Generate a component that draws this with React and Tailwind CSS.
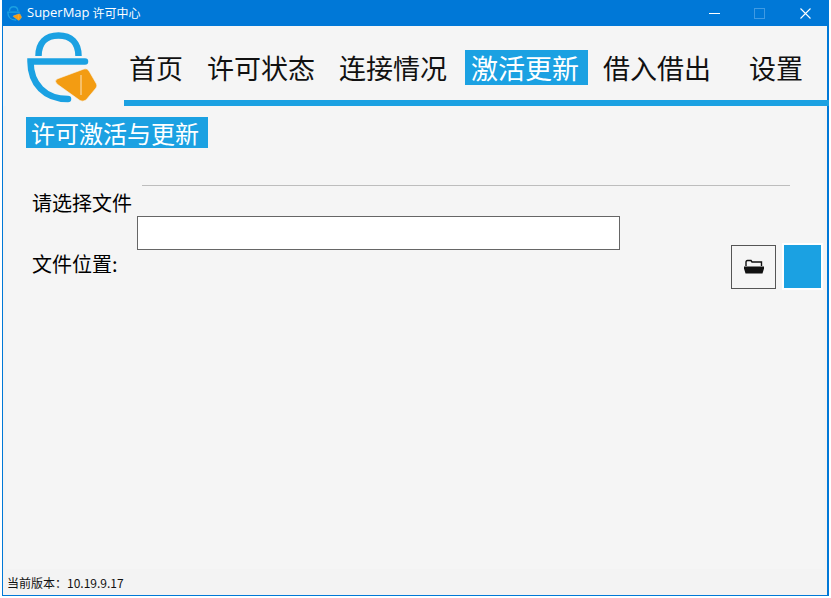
const font = { fontFamily: '"Noto Sans CJK SC", "Liberation Sans", sans-serif' }

function Logo({ className }) {
  return (
    <svg className={className} viewBox="27 32 71 72" fill="none">
      <path d="M38.5 56 C38.5 43 46 35.5 58.5 35.5 C71 35.5 78.5 43 78.5 56" stroke="#1ba1e2" strokeWidth="6.5" />
      <path d="M85 61.5 L30.5 61.5 C30.5 84 45 99 68 99" stroke="#1ba1e2" strokeWidth="6.5" strokeLinecap="round" />
      <path d="M57 79 L84 69 Q87 68 89 71 L96.5 84 Q97.5 86 96 88 L86 100 Q83 102 80 100.5 L57 84 Q54 81 57 79 Z" fill="#f39c12" stroke="#f5f5f5" strokeWidth="0.6" />
      <path d="M81 75 L81 95" stroke="#fbe3bd" strokeWidth="1" />
    </svg>
  )
}

function NavItem({ label, active, className }) {
  return (
    <div className={'h-[35px] leading-[36px] text-[27px] pl-[6px] ' + (active ? 'pr-[9px] bg-[#1ba1e2] text-white ' : 'pr-[6px] text-[#111] ') + className}>
      {label}
    </div>
  )
}

export default function App() {
  return (
    <div className="w-[831px] h-[598px] bg-white pl-[2px]" style={font}>
      <div className="w-[827px] h-[596px] border-l border-r-2 border-b border-[#0078d7] flex flex-col bg-[#f3f3f3]">
        <div className="h-[26px] shrink-0 -ml-px -mr-[2px] bg-[#0078d7] flex items-center text-white">
          <Logo className="w-[15px] h-[15px] ml-[5px]" />
          <span className="ml-[5px] text-[13px]" style={{ fontFamily: '"Open Sans", sans-serif' }}>SuperMap</span>
          <span className="ml-[3px] text-[12px]">许可中心</span>
          <div className="ml-auto flex items-center">
            <svg width="11" height="11" viewBox="0 0 11 11" shapeRendering="crispEdges">
              <path d="M0 5.5 H11" stroke="white" strokeWidth="1" />
            </svg>
            <svg width="11" height="11" viewBox="0 0 11 11" shapeRendering="crispEdges" className="ml-[34px]">
              <rect x="0.5" y="0.5" width="10" height="10" fill="none" stroke="#3f9ae3" strokeWidth="1" />
            </svg>
            <svg width="11" height="11" viewBox="0 0 11 11" className="ml-[35px] mr-[18px]">
              <path d="M0.5 0.5 L10.5 10.5 M10.5 0.5 L0.5 10.5" stroke="white" strokeWidth="1.1" />
            </svg>
          </div>
        </div>

        <div className="flex h-[80px] shrink-0 bg-[#f5f5f5]">
          <Logo className="w-[71px] h-[72px] ml-[24px] mt-[6px]" />
          <div className="flex-1 ml-[26px] -mr-[2px] border-b-[6px] border-[#1ba1e2] flex items-start pt-[24px]">
            <NavItem label="首页" className="-ml-px" />
            <NavItem label="许可状态" className="ml-[12px]" />
            <NavItem label="连接情况" className="ml-[12px]" />
            <NavItem label="激活更新" active className="ml-[12px]" />
            <NavItem label="借入借出" className="ml-[9px]" />
            <NavItem label="设置" className="ml-[26px]" />
          </div>
        </div>

        <div className="h-[463px] shrink-0 mx-[3px] bg-[#f5f5f5] flex flex-col pl-[20px]">
          <div className="mt-[11px] w-[182px] h-[31px] bg-[#1ba1e2] text-white text-[24px] leading-[32px] pl-[5px] whitespace-nowrap">
            许可激活与更新
          </div>
          <div className="ml-[116px] mt-[37px] w-[648px] h-px bg-[#bdbdbd]" />
          <div className="flex mt-[3px]">
            <div className="pl-[6px] w-[111px] shrink-0 text-[20px] leading-[28px] text-black">
              <div className="whitespace-nowrap">请选择文件</div>
              <div className="mt-[33px] whitespace-nowrap">文件位置:</div>
            </div>
            <input className="mt-[27px] w-[483px] h-[34px] bg-white border border-[#666]" />
            <button className="ml-[111px] mt-[56px] w-[45px] h-[44px] border border-[#555] flex items-center justify-center">
              <svg width="22" height="16" viewBox="0 0 22 16">
                <path d="M3 7 V3 Q3 1.5 4.5 1.5 H8 L9 3 H18.5 V7" fill="none" stroke="#111" strokeWidth="1.4" />
                <path d="M1 7.5 H21 V9.5 L19.5 14.5 H2.5 L1 9.5 Z" fill="#111" />
              </svg>
            </button>
            <button className="ml-[6px] mt-[54px] w-[41px] h-[47px] border-2 border-white bg-[#1ba1e2]" />
          </div>
        </div>

        <div className="flex-1 text-[12px] leading-[28px] pl-[4px] text-[#111] whitespace-nowrap">
          当前版本：10.19.9.17
        </div>
      </div>
    </div>
  )
}
